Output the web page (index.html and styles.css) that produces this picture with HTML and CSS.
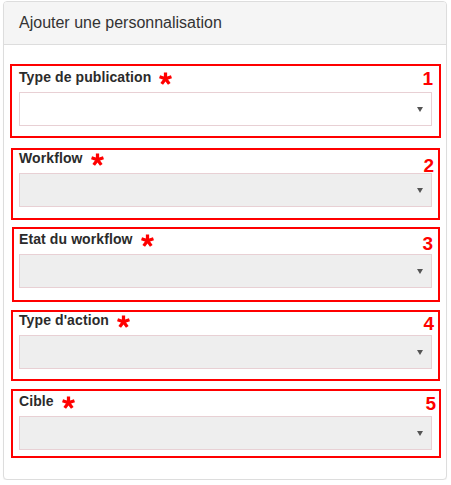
FILE: index.html
```html
<!DOCTYPE html>
<html lang="fr">
<head>
<meta charset="utf-8">
<title>Ajouter une personnalisation</title>
<link rel="stylesheet" href="styles.css">
</head>
<body>
<div class="panel">
  <div class="panel-heading">Ajouter une personnalisation</div>
  <div class="panel-body">
    <div class="form-group">
      <label class="lbl">Type de publication<svg class="req" viewBox="0 0 12 12"><path d="M6 0.5V6.2M6 6.2L11.5 4.4M6 6.2L9.5 11M6 6.2L2.5 11M6 6.2L0.5 4.4"/></svg></label>
      <div class="select"></div>
      <div class="mark m1"><span class="num n1">1</span></div>
    </div>
    <div class="form-group">
      <label class="lbl">Workflow<svg class="req" viewBox="0 0 12 12"><path d="M6 0.5V6.2M6 6.2L11.5 4.4M6 6.2L9.5 11M6 6.2L2.5 11M6 6.2L0.5 4.4"/></svg></label>
      <div class="select disabled"></div>
      <div class="mark m2"><span class="num n2">2</span></div>
    </div>
    <div class="form-group">
      <label class="lbl">Etat du workflow<svg class="req" viewBox="0 0 12 12"><path d="M6 0.5V6.2M6 6.2L11.5 4.4M6 6.2L9.5 11M6 6.2L2.5 11M6 6.2L0.5 4.4"/></svg></label>
      <div class="select disabled"></div>
      <div class="mark m3"><span class="num n3">3</span></div>
    </div>
    <div class="form-group">
      <label class="lbl">Type d'action<svg class="req" viewBox="0 0 12 12"><path d="M6 0.5V6.2M6 6.2L11.5 4.4M6 6.2L9.5 11M6 6.2L2.5 11M6 6.2L0.5 4.4"/></svg></label>
      <div class="select disabled"></div>
      <div class="mark m4"><span class="num n4">4</span></div>
    </div>
    <div class="form-group">
      <label class="lbl">Cible<svg class="req" viewBox="0 0 12 12"><path d="M6 0.5V6.2M6 6.2L11.5 4.4M6 6.2L9.5 11M6 6.2L2.5 11M6 6.2L0.5 4.4"/></svg></label>
      <div class="select disabled"></div>
      <div class="mark m5"><span class="num n5">5</span></div>
    </div>
  </div>
</div>
</body>
</html>
```
FILE: styles.css
```css
* { box-sizing: border-box; }
html, body { margin: 0; padding: 0; background: #fff; }
body {
  font-family: "Liberation Sans", Arial, sans-serif;
  color: #333;
}
.panel {
  margin: 1px 0 0 3px;
  width: 444px;
  border: 1px solid #ddd;
  border-radius: 4px;
  background: #fff;
  box-shadow: 0 1px 1px rgba(0,0,0,0.05);
}
.panel-heading {
  height: 43px;
  line-height: 42px;
  padding: 0 15px;
  font-size: 16px;
  color: #333;
  background: #f5f5f5;
  border-bottom: 1px solid #ddd;
  border-radius: 3px 3px 0 0;
}
.panel-body {
  padding: 21px 14px 29px 15px;
  display: flex;
  flex-direction: column;
  gap: 21px;
}
.form-group {
  position: relative;
  display: flex;
  flex-direction: column;
  gap: 5px;
}
.lbl {
  display: block;
  height: 21px;
  padding-top: 1px;
  line-height: 20px;
  font-size: 14px;
  font-weight: bold;
  letter-spacing: 0.1px;
  color: #2b2b2b;
}
.req {
  display: inline-block;
  width: 13px;
  height: 13px;
  margin-left: 8px;
  vertical-align: -3px;
  fill: none;
  stroke: #ff0000;
  stroke-width: 3;
  stroke-linecap: butt;
}
.select {
  position: relative;
  height: 34px;
  border: 1px solid #e8d0d4;
  background: #fff;
}
.select.disabled { background: #eeeeee; }
.select::after {
  content: "";
  position: absolute;
  right: 8px;
  top: 14px;
  border-left: 3px solid transparent;
  border-right: 3px solid transparent;
  border-top: 5px solid #555;
}
.mark {
  position: absolute;
  border: 2px solid #ff0000;
  pointer-events: none;
}
.m1 { left: -9px; top: -2px; width: 431px; height: 74px; }
.m2 { left: -8px; top: 1px; width: 429px; height: 72px; }
.m3 { left: -7px; top: -1px; width: 428px; height: 75px; }
.m4 { left: -8px; top: 1px; width: 429px; height: 71px; }
.m5 { left: -8px; top: -1px; width: 430px; height: 69px; }
.num {
  position: absolute;
  font-size: 19px;
  line-height: 18px;
  font-weight: bold;
  color: #ff0000;
}
.n1 { top: 4px; right: 6px; }
.n2 { top: 7px; right: 4px; }
.n3 { top: 6px; right: 5px; }
.n4 { top: 3px; right: 4px; }
.n5 { top: 4px; right: 3px; }
```
